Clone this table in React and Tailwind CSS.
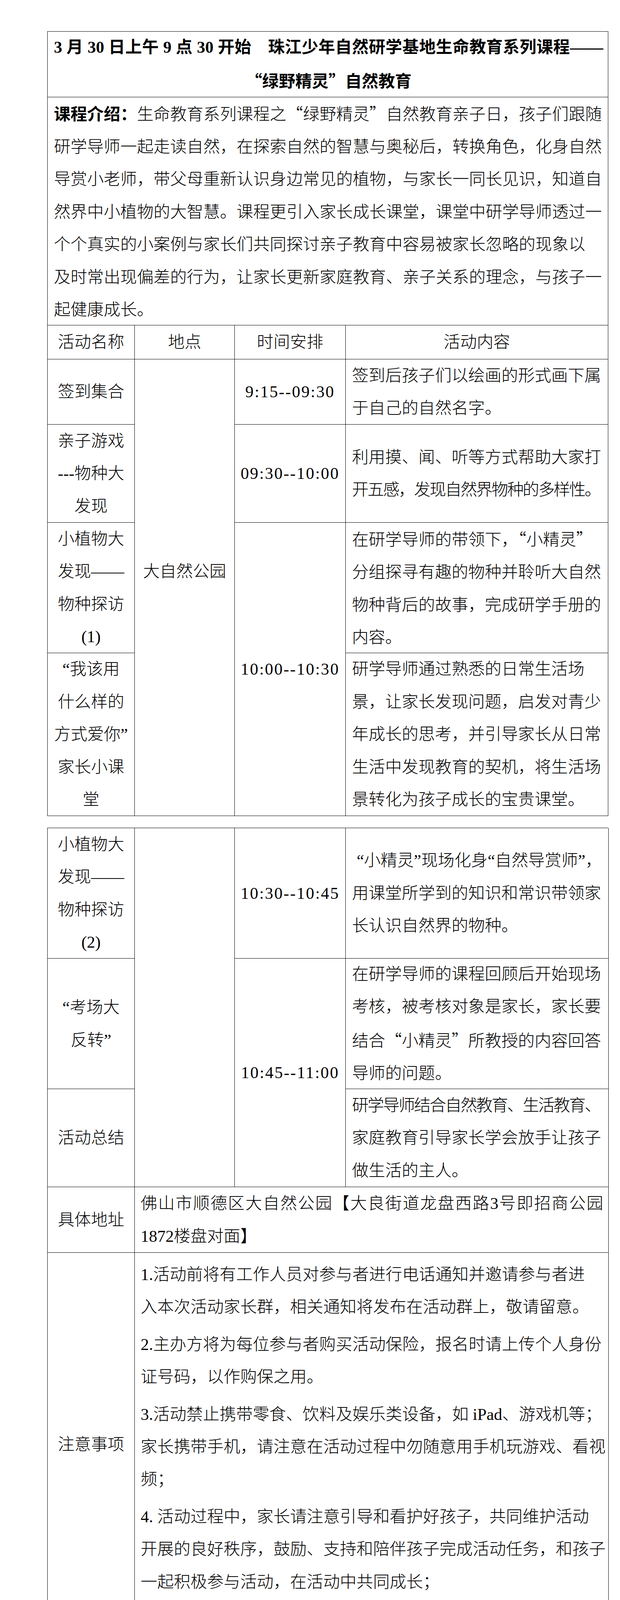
import React from 'react';

function FW({ c }) {
  return <span className="font-['Noto_Sans_CJK_SC',sans-serif]">{c}</span>;
}

function rich(s, fw) {
  if (!fw) return s;
  return s.split(/([“”])/).map((p, i) =>
    p === '“' || p === '”' ? <FW key={i} c={p} /> : <React.Fragment key={i}>{p}</React.Fragment>
  );
}

function Ln({ t, fw, j, cls = '' }) {
  return (
    <div className={`leading-[83.4px] ${j ? 'text-justify [text-align-last:justify]' : 'whitespace-nowrap'} ${cls}`}>
      {rich(t, fw)}
    </div>
  );
}

function Cell({ children, cls = '' }) {
  return <div className={`border-r border-b border-black flex flex-col justify-center ${cls}`}>{children}</div>;
}

function Name({ lines }) {
  return (
    <Cell cls="items-center text-center">
      {lines.map((l, i) => (
        <Ln key={i} t={l} />
      ))}
    </Cell>
  );
}

function Time({ t, cls = '' }) {
  return (
    <Cell cls={`items-center ${cls}`}>
      <div className="leading-[83.4px] whitespace-nowrap tracking-[2.6px]">{t}</div>
    </Cell>
  );
}

function Content({ children }) {
  return <Cell cls="px-[16px]">{children}</Cell>;
}

export default function App() {
  return (
    <div className="w-[1587px] min-h-[4837px] bg-white pt-[80px] pl-[121px] text-black text-[42.5px] font-light font-['Liberation_Serif','Noto_Sans_CJK_SC',serif]">
      {/* Part 1 */}
      <div className="w-[1436px] border-l border-t border-black">
        <div className="h-[168px] border-r border-b border-black flex flex-col justify-center pl-[16px] pr-[12px] font-bold">
          <Ln j t="3 月 30 日上午 9 点 30 开始　珠江少年自然研学基地生命教育系列课程——" />
          <Ln fw t="“绿野精灵”自然教育" cls="text-center" />
        </div>
        <div className="h-[584px] border-r border-b border-black flex flex-col justify-center pl-[16px] pr-[8px]">
          <div className="leading-[83.4px] whitespace-nowrap">
            <span className="font-bold">课程介绍：</span>生命教育系列课程之<FW c="“" />绿野精灵<FW c="”" />自然教育亲子日，孩子们跟随
          </div>
          <Ln t="研学导师一起走读自然，在探索自然的智慧与奥秘后，转换角色，化身自然" />
          <Ln t="导赏小老师，带父母重新认识身边常见的植物，与家长一同长见识，知道自" />
          <Ln t="然界中小植物的大智慧。课程更引入家长成长课堂，课堂中研学导师透过一" />
          <Ln t="个个真实的小案例与家长们共同探讨亲子教育中容易被家长忽略的现象以" />
          <Ln t="及时常出现偏差的行为，让家长更新家庭教育、亲子关系的理念，与孩子一" />
          <Ln t="起健康成长。" />
        </div>
        <div className="grid grid-cols-[223px_256px_284px_1fr] grid-rows-[87px_167px_251px_334px_417px]">
          <Name lines={['活动名称']} />
          <Name lines={['地点']} />
          <Name lines={['时间安排']} />
          <Name lines={['活动内容']} />

          <Name lines={['签到集合']} />
          <div className="row-span-4 border-r border-b border-black flex flex-col items-center justify-start pt-[501px]">
            <Ln t="大自然公园" />
          </div>
          <Time t="9:15--09:30" />
          <Content>
            <Ln t="签到后孩子们以绘画的形式画下属" />
            <Ln t="于自己的自然名字。" />
          </Content>

          <Name lines={['亲子游戏', '---物种大', '发现']} />
          <Time t="09:30--10:00" />
          <Content>
            <Ln t="利用摸、闻、听等方式帮助大家打" />
            <Ln t="开五感，发现自然界物种的多样性。" cls="tracking-[-2.8px]" />
          </Content>

          <Name lines={['小植物大', '发现——', '物种探访', '(1)']} />
          <Time t="10:00--10:30" cls="row-span-2" />
          <Content>
            <Ln fw t="在研学导师的带领下，“小精灵”" />
            <Ln t="分组探寻有趣的物种并聆听大自然" />
            <Ln t="物种背后的故事，完成研学手册的" />
            <Ln t="内容。" />
          </Content>

          <Name lines={['“我该用', '什么样的', '方式爱你”', '家长小课', '堂']} />
          <Content>
            <Ln t="研学导师通过熟悉的日常生活场" />
            <Ln t="景，让家长发现问题，启发对青少" />
            <Ln t="年成长的思考，并引导家长从日常" />
            <Ln t="生活中发现教育的契机，将生活场" />
            <Ln t="景转化为孩子成长的宝贵课堂。" />
          </Content>
        </div>
      </div>

      {/* Part 2 */}
      <div className="mt-[30px] w-[1436px] border-l border-t border-black grid grid-cols-[223px_256px_284px_1fr] grid-rows-[334px_334px_251px_168px_982px]">
        <Name lines={['小植物大', '发现——', '物种探访', '(2)']} />
        <div className="row-span-3 border-r border-b border-black" />
        <Time t="10:30--10:45" />
        <Content>
          <Ln t="“小精灵”现场化身“自然导赏师”，" cls="pl-[12px]" />
          <Ln t="用课堂所学到的知识和常识带领家" />
          <Ln t="长认识自然界的物种。" />
        </Content>

        <Name lines={['“考场大', '反转”']} />
        <Time t="10:45--11:00" cls="row-span-2" />
        <Content>
          <Ln t="在研学导师的课程回顾后开始现场" />
          <Ln t="考核，被考核对象是家长，家长要" />
          <Ln fw t="结合“小精灵”所教授的内容回答" />
          <Ln t="导师的问题。" />
        </Content>

        <Name lines={['活动总结']} />
        <Content>
          <Ln t="研学导师结合自然教育、生活教育、" cls="tracking-[-2.8px]" />
          <Ln t="家庭教育引导家长学会放手让孩子" />
          <Ln t="做生活的主人。" />
        </Content>

        <Name lines={['具体地址']} />
        <div className="col-span-3 border-r border-b border-black flex flex-col justify-center pl-[15px] pr-[13px]">
          <Ln j t="佛山市顺德区大自然公园【大良街道龙盘西路3号即招商公园" />
          <Ln t="1872楼盘对面】" />
        </div>

        <Name lines={['注意事项']} />
        <div className="col-span-3 border-r border-b border-black flex flex-col justify-start pt-[14px] pl-[15px] pr-[4px] overflow-hidden">
          <div>
            <Ln t="1.活动前将有工作人员对参与者进行电话通知并邀请参与者进" />
            <Ln t="入本次活动家长群，相关通知将发布在活动群上，敬请留意。" />
          </div>
          <div className="mt-[12px]">
            <Ln t="2.主办方将为每位参与者购买活动保险，报名时请上传个人身份" />
            <Ln t="证号码，以作购保之用。" />
          </div>
          <div className="mt-[12px]">
            <Ln t="3.活动禁止携带零食、饮料及娱乐类设备，如 iPad、游戏机等；" />
            <Ln t="家长携带手机，请注意在活动过程中勿随意用手机玩游戏、看视" />
            <Ln t="频；" />
          </div>
          <div className="mt-[12px]">
            <Ln t="4. 活动过程中，家长请注意引导和看护好孩子，共同维护活动" />
            <Ln t="开展的良好秩序，鼓励、支持和陪伴孩子完成活动任务，和孩子" />
            <Ln t="一起积极参与活动，在活动中共同成长；" />
          </div>
          <div className="mt-[12px]">
            <Ln t="5.活动建议着装以舒适轻便的运动鞋服为主（尽量避免穿戴珠宝" />
          </div>
        </div>
      </div>

      {/* Part 3 */}
      <div className="mt-[30px] w-[1436px] border-l border-t border-black grid grid-cols-[223px_1fr] grid-rows-[278px_91px_168px]">
        <div className="border-r border-b border-black" />
        <div className="border-r border-b border-black flex flex-col justify-start pt-[1px] pl-[15px] pr-[4px]">
          <Ln t="首饰等），带好笔、笔记本、帽、水壶；" />
          <div className="mt-[12px]">
            <Ln t="6.活动精彩照片和视频将在活动群、研学导师朋友圈、珠江少年" />
            <Ln t="杂志社公众号等进行分享播报，请家长留意关注。" />
          </div>
        </div>

        <Name lines={['报名对象']} />
        <div className="border-r border-b border-black flex flex-col justify-center pl-[15px]">
          <div className="leading-[83.4px] whitespace-nowrap">
            小学 1<span className="align-super text-[30px]">~</span>6 年级学生
          </div>
        </div>

        <Name lines={['收费标准']} />
        <div className="border-r border-b border-black flex flex-col justify-center pl-[15px] pr-[13px]">
          <Ln j t="88元/一大一小（包含2元/组报名费、10元/组团体保险费、76" />
          <Ln t="元/组材料费）" />
        </div>
      </div>
    </div>
  );
}
